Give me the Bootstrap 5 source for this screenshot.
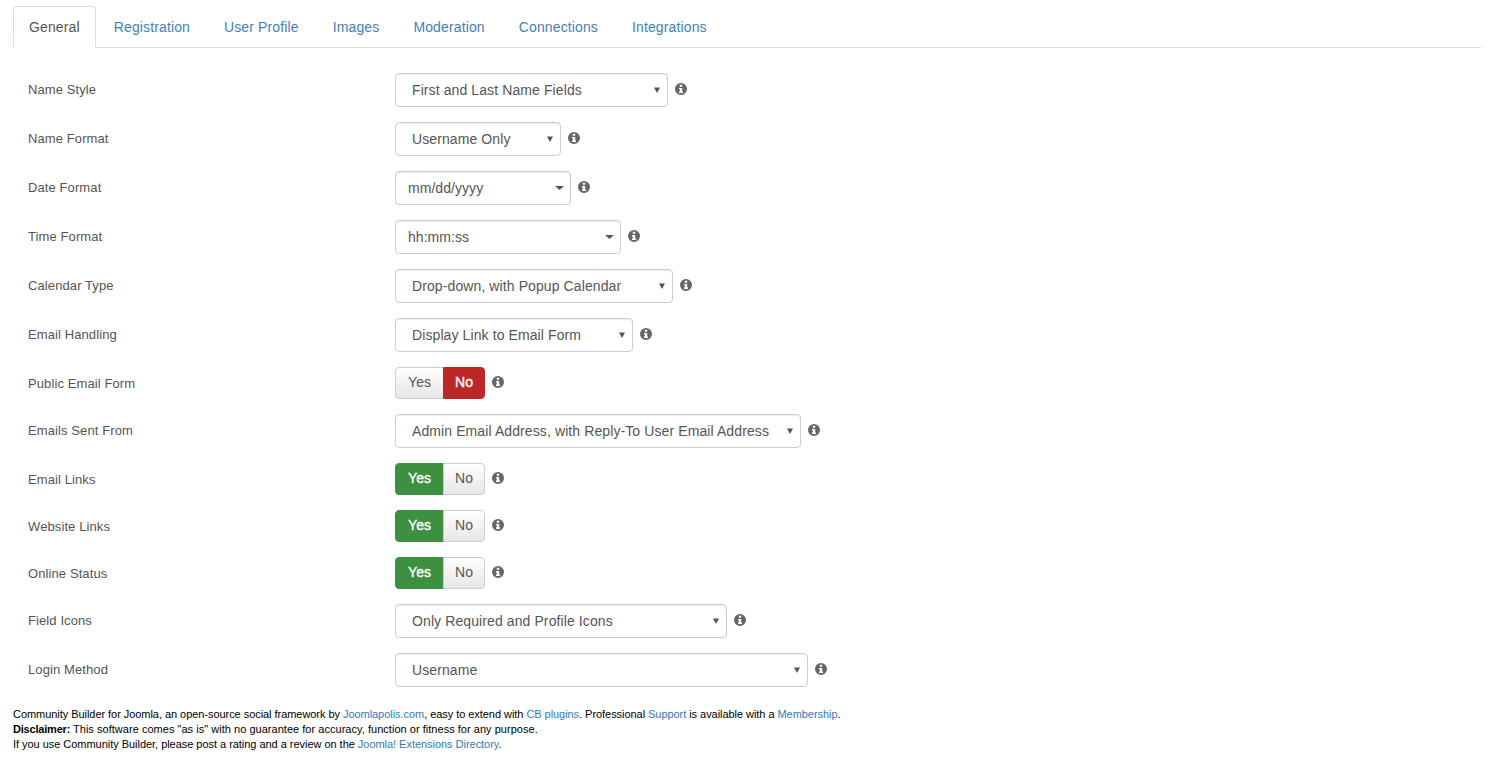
<!DOCTYPE html>
<html lang="en">
<head>
<meta charset="utf-8">
<title>Community Builder</title>
<link href="https://cdn.jsdelivr.net/npm/bootstrap@5.3.0/dist/css/bootstrap.min.css" rel="stylesheet">
<style>
body{font-family:"Liberation Sans",Arial,sans-serif;font-size:14px;line-height:20px;color:#555;background:#fff;}
.cb-wrap{padding:6px 9px 0 13px;}
.cb-tabs{border-bottom:1px solid #ddd;gap:2px;}
.cb-tabs .nav-link{padding:10px 15px;font-size:14px;line-height:20px;letter-spacing:.13px;color:#3f7fc0;border:1px solid transparent;border-radius:4px 4px 0 0;margin-bottom:-1px;}
.cb-tabs .nav-link.active{color:#555;background:#fff;border-color:#ddd #ddd #fff;}
.cb-form{padding-top:25px;}
.cb-row{display:flex;margin-bottom:15px;}
.cb-label{width:382px;padding-left:15px;flex:none;font-size:13px;letter-spacing:.1px;line-height:20px;padding-top:7px;margin:0;}
.cb-select{height:34px;padding:6px 30px 6px 12px;font-size:14px;letter-spacing:.1px;line-height:20px;color:#555;border:1px solid #ccc;border-radius:4px;box-shadow:inset 0 1px 1px rgba(0,0,0,.075);appearance:none;background:#fff url("data:image/svg+xml,%3Csvg xmlns='http://www.w3.org/2000/svg' width='6' height='6'%3E%3Cpath fill='%23555' d='M0 .5h6L3 6z'/%3E%3C/svg%3E") no-repeat right 7px center;flex:none;}
.cb-select.cb-wide-caret{letter-spacing:.05px;background-image:url("data:image/svg+xml,%3Csvg xmlns='http://www.w3.org/2000/svg' width='9' height='4'%3E%3Cpath fill='%23555' d='M0 0h9L4.5 4z'/%3E%3C/svg%3E");background-position:right 6px center;}
.cb-pad{padding-left:16px;}
.s273{width:273px}.s166{width:166px}.s176{width:176px}.s226{width:226px}.s278{width:278px}.s238{width:238px}.s406{width:406px}.s332{width:332px}.s413{width:413px}
.cb-info{flex:none;width:12px;height:12px;margin:10px 0 0 7px;color:#666;}
.cb-toggle .btn{height:32px;padding:4px 0 6px;font-size:14px;line-height:20px;border:1px solid #ccc;color:#555;background:linear-gradient(#fff,#e6e6e6);border-radius:4px;}
.cb-toggle .btn-y{width:49px}
.cb-toggle .btn-n{width:42px}
.cb-toggle .cb-no-on,.cb-toggle .cb-no-on:hover{color:#fff;background:#bd2826;border-color:#bd2826;-webkit-text-stroke:.35px #fff;}
.cb-toggle .cb-yes-on,.cb-toggle .cb-yes-on:hover{color:#fff;background:#3c9040;border-color:#3c9040;-webkit-text-stroke:.35px #fff;}
.cb-toggle + .cb-info{margin-top:9px;}
.cb-foot{font-size:11px;line-height:15px;color:#000;margin-top:20px;}
.cb-foot a{color:#337ab7;text-decoration:none;}
.cb-l1{letter-spacing:-.05px}
.cb-l2{letter-spacing:.03px}
.cb-l2 strong{letter-spacing:-.2px}
.cb-l3{letter-spacing:-.035px}
</style>
</head>
<body>
<svg width="0" height="0" class="position-absolute"><symbol id="cb-i" viewBox="0 0 12 12"><path fill="currentColor" fill-rule="evenodd" d="M6 0a6 6 0 1 1 0 12A6 6 0 0 1 6 0zM4.800 1.800v1.900h2.400V1.800zM4 5v1.200h.8v2.400H4V10h4V8.600H7.200V5z"/></symbol></svg>
<div class="cb-wrap">
<ul class="nav nav-tabs cb-tabs">
<li class="nav-item"><a class="nav-link active" href="#">General</a></li>
<li class="nav-item"><a class="nav-link" href="#">Registration</a></li>
<li class="nav-item"><a class="nav-link" href="#">User Profile</a></li>
<li class="nav-item"><a class="nav-link" href="#">Images</a></li>
<li class="nav-item"><a class="nav-link" href="#">Moderation</a></li>
<li class="nav-item"><a class="nav-link" href="#">Connections</a></li>
<li class="nav-item"><a class="nav-link" href="#">Integrations</a></li>
</ul>
<form class="cb-form">
<div class="cb-row"><label class="cb-label">Name Style</label><select class="cb-select cb-pad s273"><option>First and Last Name Fields</option></select><svg class="cb-info"><use href="#cb-i"/></svg></div>
<div class="cb-row"><label class="cb-label">Name Format</label><select class="cb-select cb-pad s166"><option>Username Only</option></select><svg class="cb-info"><use href="#cb-i"/></svg></div>
<div class="cb-row"><label class="cb-label">Date Format</label><select class="cb-select cb-wide-caret s176"><option>mm/dd/yyyy</option></select><svg class="cb-info"><use href="#cb-i"/></svg></div>
<div class="cb-row"><label class="cb-label">Time Format</label><select class="cb-select cb-wide-caret s226"><option>hh:mm:ss</option></select><svg class="cb-info"><use href="#cb-i"/></svg></div>
<div class="cb-row"><label class="cb-label">Calendar Type</label><select class="cb-select cb-pad s278"><option>Drop-down, with Popup Calendar</option></select><svg class="cb-info"><use href="#cb-i"/></svg></div>
<div class="cb-row"><label class="cb-label">Email Handling</label><select class="cb-select cb-pad s238"><option>Display Link to Email Form</option></select><svg class="cb-info"><use href="#cb-i"/></svg></div>
<div class="cb-row"><label class="cb-label">Public Email Form</label><div class="btn-group cb-toggle"><button type="button" class="btn btn-y">Yes</button><button type="button" class="btn btn-n cb-no-on">No</button></div><svg class="cb-info"><use href="#cb-i"/></svg></div>
<div class="cb-row"><label class="cb-label">Emails Sent From</label><select class="cb-select cb-pad s406"><option>Admin Email Address, with Reply-To User Email Address</option></select><svg class="cb-info"><use href="#cb-i"/></svg></div>
<div class="cb-row"><label class="cb-label">Email Links</label><div class="btn-group cb-toggle"><button type="button" class="btn btn-y cb-yes-on">Yes</button><button type="button" class="btn btn-n">No</button></div><svg class="cb-info"><use href="#cb-i"/></svg></div>
<div class="cb-row"><label class="cb-label">Website Links</label><div class="btn-group cb-toggle"><button type="button" class="btn btn-y cb-yes-on">Yes</button><button type="button" class="btn btn-n">No</button></div><svg class="cb-info"><use href="#cb-i"/></svg></div>
<div class="cb-row"><label class="cb-label">Online Status</label><div class="btn-group cb-toggle"><button type="button" class="btn btn-y cb-yes-on">Yes</button><button type="button" class="btn btn-n">No</button></div><svg class="cb-info"><use href="#cb-i"/></svg></div>
<div class="cb-row"><label class="cb-label">Field Icons</label><select class="cb-select cb-pad s332"><option>Only Required and Profile Icons</option></select><svg class="cb-info"><use href="#cb-i"/></svg></div>
<div class="cb-row"><label class="cb-label">Login Method</label><select class="cb-select cb-pad s413"><option>Username</option></select><svg class="cb-info"><use href="#cb-i"/></svg></div>
</form>
<div class="cb-foot">
<div class="cb-l1">Community Builder for Joomla, an open-source social framework by <a href="#">Joomlapolis.com</a>, easy to extend with <a href="#">CB plugins</a>. Professional <a href="#">Support</a> is available with a <a href="#">Membership</a>.</div>
<div class="cb-l2"><strong>Disclaimer:</strong> This software comes "as is" with no guarantee for accuracy, function or fitness for any purpose.</div>
<div class="cb-l3">If you use Community Builder, please post a rating and a review on the <a href="#">Joomla! Extensions Directory</a>.</div>
</div>
</div>
<script src="https://cdn.jsdelivr.net/npm/bootstrap@5.3.0/dist/js/bootstrap.bundle.min.js"></script>
</body>
</html>
